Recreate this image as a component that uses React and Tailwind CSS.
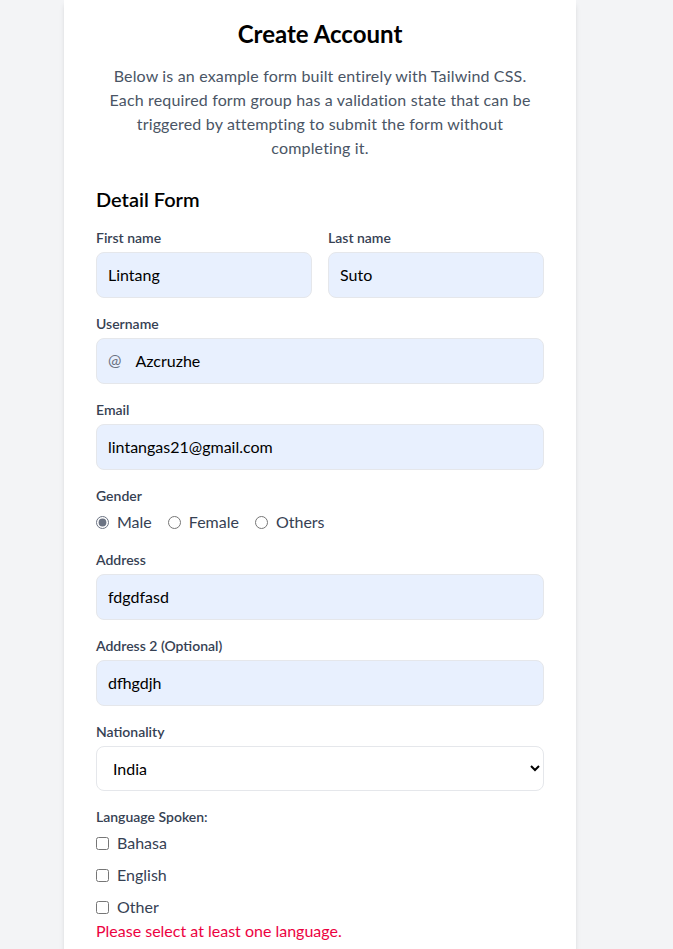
import { useState } from 'react'

const inputClass =
  'h-[46px] w-full rounded-lg border border-gray-200 bg-[#e8f0fe] pl-[11px] pr-3 pb-[2px] text-base text-black outline-none'

function Field({ label, children }) {
  return (
    <div className="flex flex-col">
      <label className="mb-1 text-sm leading-5 font-semibold text-gray-700">{label}</label>
      {children}
    </div>
  )
}

export default function App() {
  const [gender, setGender] = useState('male')
  const [langs, setLangs] = useState({ bahasa: false, english: false, other: false })

  return (
    <div className="min-h-screen bg-gray-100 font-['Lato',sans-serif]">
      <div className="ml-16 w-[512px] bg-white px-8 pt-[18px] pb-8 shadow-md">
        <h1 className="text-center text-2xl leading-8 font-bold text-black">Create Account</h1>
        <p className="mt-[14px] px-1 text-center text-base leading-6 tracking-[0.01em] text-gray-600">
          Below is an example form built entirely with Tailwind CSS. Each required form group has a
          validation state that can be triggered by attempting to submit the form without completing it.
        </p>

        <h2 className="mt-[25px] text-xl leading-7 font-semibold text-black">Detail Form</h2>

        <form className="mt-[15px] flex flex-col gap-4" onSubmit={(e) => e.preventDefault()}>
          <div className="grid grid-cols-2 gap-4">
            <Field label="First name">
              <input className={inputClass} defaultValue="Lintang" />
            </Field>
            <Field label="Last name">
              <input className={inputClass} defaultValue="Suto" />
            </Field>
          </div>

          <Field label="Username">
            <div className="flex h-[46px] w-full items-center rounded-lg border border-gray-200 bg-[#e8f0fe] pl-[11px] pr-3 pb-[2px]">
              <span className="text-base text-gray-500">@</span>
              <input
                className="ml-[14px] h-full flex-1 bg-transparent text-base text-black outline-none"
                defaultValue="Azcruzhe"
              />
            </div>
          </Field>

          <Field label="Email">
            <input className={inputClass} defaultValue="lintangas21@gmail.com" />
          </Field>

          <Field label="Gender">
            <div className="flex h-6 items-center gap-4">
              {[
                ['male', 'Male'],
                ['female', 'Female'],
                ['others', 'Others'],
              ].map(([value, text]) => (
                <label key={value} className="flex items-center gap-2 text-base text-gray-700">
                  <input
                    type="radio"
                    name="gender"
                    className="m-0 h-[13px] w-[13px] accent-gray-500"
                    checked={gender === value}
                    onChange={() => setGender(value)}
                  />
                  {text}
                </label>
              ))}
            </div>
          </Field>

          <Field label="Address">
            <input className={inputClass} defaultValue="fdgdfasd" />
          </Field>

          <Field label="Address 2 (Optional)">
            <input className={inputClass} defaultValue="dfhgdjh" />
          </Field>

          <Field label="Nationality">
            <select
              className="h-[45px] w-full rounded-lg border border-gray-200 bg-white px-3 text-base text-black outline-none"
              defaultValue="India"
            >
              <option>India</option>
              <option>Indonesia</option>
              <option>Malaysia</option>
            </select>
          </Field>

          <div className="flex flex-col">
            <span className="text-sm leading-5 font-semibold text-gray-700">Language Spoken:</span>
            <div className="mt-1 flex flex-col gap-2">
              {[
                ['bahasa', 'Bahasa'],
                ['english', 'English'],
                ['other', 'Other'],
              ].map(([key, text]) => (
                <label key={key} className="flex h-6 items-center gap-2 text-base text-gray-700">
                  <input
                    type="checkbox"
                    className="m-0 h-[13px] w-[13px]"
                    checked={langs[key]}
                    onChange={() => setLangs({ ...langs, [key]: !langs[key] })}
                  />
                  {text}
                </label>
              ))}
            </div>
            <p className="text-base leading-6 text-rose-600">Please select at least one language.</p>
          </div>
        </form>
      </div>
    </div>
  )
}
